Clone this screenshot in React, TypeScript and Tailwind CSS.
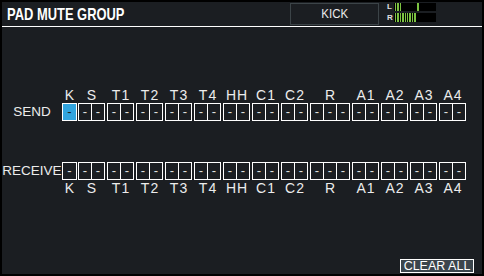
import React from "react";

type Group = { label: string; cells: number; width: number };

const groups: Group[] = [
  { label: "K", cells: 1, width: 15 },
  { label: "S", cells: 2, width: 27 },
  { label: "T1", cells: 2, width: 27 },
  { label: "T2", cells: 2, width: 27 },
  { label: "T3", cells: 2, width: 27 },
  { label: "T4", cells: 2, width: 27 },
  { label: "HH", cells: 2, width: 27 },
  { label: "C1", cells: 2, width: 27 },
  { label: "C2", cells: 2, width: 27 },
  { label: "R", cells: 3, width: 40 },
  { label: "A1", cells: 2, width: 27 },
  { label: "A2", cells: 2, width: 27 },
  { label: "A3", cells: 2, width: 27 },
  { label: "A4", cells: 2, width: 27 },
];

const font = { fontFamily: '"Liberation Sans", Arial, sans-serif' };

function LabelRow() {
  return (
    <div className="flex h-[14px]">
      <div className="w-[60px]" />
      {groups.map((g, i) => (
        <div
          key={g.label}
          className={`flex h-[14px] justify-center whitespace-nowrap text-[14px] leading-[14px] tracking-[1px] text-[#ececec] ${
            i === 0 ? "mr-[1px]" : "mr-[2px]"
          }`}
          style={{ width: g.width, textIndent: 1 }}
        >
          {g.label}
        </div>
      ))}
    </div>
  );
}

function CellRow({ label, selected }: { label: string; selected?: boolean }) {
  return (
    <div className="flex h-[18px] items-center">
      <div className="flex w-[60px] justify-center whitespace-nowrap text-[13.5px] leading-[18px] text-[#ececec]">
        {label}
      </div>
      {groups.map((g, i) => (
        <div
          key={g.label}
          className={`flex h-[18px] divide-x divide-white border border-white ${
            i === 0 ? "mr-[1px]" : "mr-[2px]"
          } ${selected && i === 0 ? "bg-[#31a4de]" : ""}`}
          style={{ width: g.width }}
        >
          {Array.from({ length: g.cells }).map((_, c) => (
            <div
              key={c}
              className={`flex flex-1 items-center justify-center text-[13px] leading-[16px] ${
                selected && i === 0 ? "text-[#1a1d21]" : "text-[#e0e0e0]"
              }`}
            >
              -
            </div>
          ))}
        </div>
      ))}
    </div>
  );
}

function Meter() {
  return (
    <div className="mt-[1px] flex flex-col gap-[2px]">
      <div className="flex h-[8px] items-center">
        <span className="w-[7px] text-[8px] font-bold leading-[8px] text-[#e0e0e0]">L</span>
        <div className="flex h-[8px] w-[42px] gap-[1px] bg-black pl-[1px]">
          <div className="h-full w-[1.4px] bg-[#7cc242]" />
          <div className="h-full w-[1.4px] bg-[#7cc242]" />
          <div className="h-full w-[1.4px] bg-[#7cc242]" />
          <div className="ml-[15px] h-full w-[1.4px] bg-[#7cc242]" />
        </div>
      </div>
      <div className="flex h-[9px] items-center">
        <span className="w-[7px] text-[8px] font-bold leading-[8px] text-[#e0e0e0]">R</span>
        <div className="flex h-[9px] w-[42px] gap-[1px] bg-black pl-[1px]">
          {Array.from({ length: 9 }).map((_, i) => (
            <div key={i} className="h-full w-[1.4px] bg-[#7cc242]" />
          ))}
        </div>
      </div>
    </div>
  );
}

export default function App() {
  return (
    <div
      className="flex h-[276px] w-[484px] flex-col border-2 border-black bg-[#1b1e22]"
      style={font}
    >
      <div className="flex h-[24px] items-start">
        <div className="flex-1 pl-[5px] pt-[3px]">
          <div className="origin-left scale-x-[0.76] whitespace-nowrap text-[17px] font-bold leading-[20px] text-white">
            PAD MUTE GROUP
          </div>
        </div>
        <div className="mt-[1px] flex h-[22px] w-[89px] items-center justify-center border border-[#3c4448]">
          <span className="scale-x-[0.85] text-[13.5px] leading-[16px] text-[#ececec]">KICK</span>
        </div>
        <div className="ml-[8px] mr-[46px]">
          <Meter />
        </div>
      </div>
      <div className="h-px bg-white" />

      <div className="mt-[61px]">
        <LabelRow />
      </div>
      <div className="mt-[1px]">
        <CellRow label="SEND" selected />
      </div>
      <div className="mt-[41px]">
        <CellRow label="RECEIVE" />
      </div>
      <div className="mt-[1px]">
        <LabelRow />
      </div>

      <div className="mt-auto mb-[1px] flex justify-end pr-[8px]">
        <div className="flex h-[14px] w-[74px] items-center justify-center border border-white bg-[#3b454c] text-[12.5px] leading-[12px] text-white">
          CLEAR ALL
        </div>
      </div>
    </div>
  );
}
